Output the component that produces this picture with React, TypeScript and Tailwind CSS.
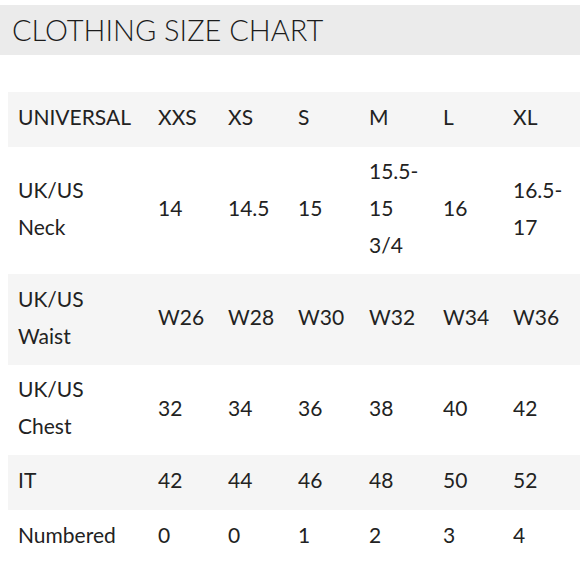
const sizes = ["XXS", "XS", "S", "M", "L", "XL"];

type Row = {
  label: string[];
  values: string[][];
  shaded: boolean;
  height: string;
};

const rows: Row[] = [
  {
    label: ["UK/US", "Neck"],
    values: [["14"], ["14.5"], ["15"], ["15.5-", "15", "3/4"], ["16"], ["16.5-", "17"]],
    shaded: false,
    height: "h-[127px]",
  },
  {
    label: ["UK/US", "Waist"],
    values: [["W26"], ["W28"], ["W30"], ["W32"], ["W34"], ["W36"]],
    shaded: true,
    height: "h-[91px]",
  },
  {
    label: ["UK/US", "Chest"],
    values: [["32"], ["34"], ["36"], ["38"], ["40"], ["42"]],
    shaded: false,
    height: "h-[90px]",
  },
  {
    label: ["IT"],
    values: [["42"], ["44"], ["46"], ["48"], ["50"], ["52"]],
    shaded: true,
    height: "h-[55px]",
  },
  {
    label: ["Numbered"],
    values: [["0"], ["0"], ["1"], ["2"], ["3"], ["4"]],
    shaded: false,
    height: "h-[55px]",
  },
];

function Lines({ lines }: { lines: string[] }) {
  return (
    <>
      {lines.map((line, i) => (
        <span key={i} className="block whitespace-nowrap">
          {line}
        </span>
      ))}
    </>
  );
}

export default function App() {
  return (
    <div className="h-[580px] w-[580px] overflow-hidden bg-white pt-[5px] font-['Lato','Liberation_Sans',sans-serif] text-[#222]">
      <header className="flex h-[50px] items-center bg-[#ebebeb] pl-[12px]">
        <h1 className="pb-[1px] text-[29px] font-light leading-none text-[#1c1c1c]">
          CLOTHING SIZE CHART
        </h1>
      </header>

      <table className="ml-2 mt-[37px] w-[572px] table-fixed border-collapse text-[21px] leading-[37px]">
        <colgroup>
          <col className="w-[140px]" />
          <col className="w-[70px]" />
          <col className="w-[70px]" />
          <col className="w-[71px]" />
          <col className="w-[74px]" />
          <col className="w-[70px]" />
          <col />
        </colgroup>
        <tbody>
          <tr className="h-[55px] bg-[#f5f5f5]">
            <td className="pb-[6px] pl-[10px] align-middle">UNIVERSAL</td>
            {sizes.map((s) => (
              <td key={s} className="pb-[6px] pl-[10px] align-middle">
                {s}
              </td>
            ))}
          </tr>
          {rows.map((row) => (
            <tr
              key={row.label.join(" ")}
              className={`${row.height} ${row.shaded ? "bg-[#f5f5f5]" : "bg-white"}`}
            >
              <td className="pb-[6px] pl-[10px] align-middle">
                <Lines lines={row.label} />
              </td>
              {row.values.map((v, i) => (
                <td key={i} className="pb-[6px] pl-[10px] align-middle">
                  <Lines lines={v} />
                </td>
              ))}
            </tr>
          ))}
        </tbody>
      </table>
    </div>
  );
}
